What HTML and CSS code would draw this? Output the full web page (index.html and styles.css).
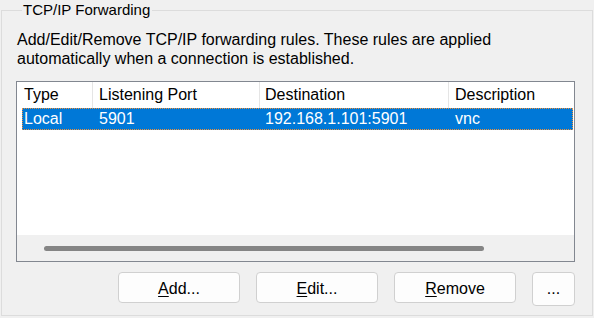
FILE: index.html
```html
<html>
<head>
  <title>TCP/IP Forwarding</title>
  <link rel="stylesheet" href="styles.css">
</head>
<body>

  <fieldset class="group">
    <legend>TCP/IP Forwarding</legend>

    <p class="hint">Add/Edit/Remove TCP/IP forwarding rules. These rules are applied<br>
      automatically when a connection is established.</p>

    <div class="list">
      <div class="cols head">
        <div class="cell">Type</div>
        <div class="cell">Listening Port</div>
        <div class="cell">Destination</div>
        <div class="cell">Description</div>
      </div>

      <div class="cols row selected">
        <div class="cell">Local</div>
        <div class="cell">5901</div>
        <div class="cell">192.168.1.101:5901</div>
        <div class="cell">vnc</div>
      </div>

      <div class="fill"></div>

      <div class="hscroll">
        <div class="thumb"></div>
      </div>
    </div>

    <div class="buttons">
      <button class="btn"><u>A</u>dd...</button>
      <button class="btn"><u>E</u>dit...</button>
      <button class="btn"><u>R</u>emove</button>
      <button class="btn more">...</button>
    </div>
  </fieldset>

</body>
</html>
```

FILE: styles.css
```css
body {
  margin: 0;
  background: #f0f0f0;
  font-family: "Liberation Sans", Arial, sans-serif;
  font-size: 16px;
  color: #000;
}

.group {
  margin: 0 1px;
  height: 316px;
  box-sizing: border-box;
  padding: 0 17px 0 14px;
  border: 1px solid #dcdcdc;
  min-inline-size: 0;
}

.group > legend {
  margin-left: 6px;
  padding: 0 2px 0 1px;
  line-height: 20px;
  font-size: 15px;
}

.hint {
  margin: 10px 0 0 1px;
  line-height: 19px;
}

/* list view */
.list {
  margin-top: 13px;
  height: 181px;
  box-sizing: border-box;
  border: 1px solid #828790;
  background: #fff;
  display: flex;
  flex-direction: column;
}

.cols {
  display: grid;
  grid-template-columns: 76px 167px 189px 1fr;
}

.head {
  height: 26px;
}

.head .cell {
  line-height: 26px;
  padding-left: 6px;
  border-right: 1px solid #e5e5e5;
}

.head .cell:first-child { padding-left: 7px; }
.head .cell:nth-child(3) { padding-left: 5px; }
.head .cell:last-child { border-right: none; }

.row {
  grid-template-columns: 71px 167px 189px 1fr;
  margin: 0 1px 0 5px;
  height: 22px;
}

.row .cell {
  line-height: 22px;
  padding-left: 6px;
}

.row .cell:first-child { padding-left: 2px; }
.row .cell:nth-child(3) { padding-left: 5px; }

.selected {
  background: #0078d7;
  color: #fff;
  outline: 1px dotted #f0913a;
  outline-offset: -1px;
}

.fill {
  flex: 1;
}

.hscroll {
  height: 26px;
  background: #f0f0f0;
  padding-top: 11px;
  box-sizing: border-box;
}

.hscroll > .thumb {
  margin-left: 27px;
  width: 440px;
  height: 5px;
  border-radius: 3px;
  background: #858585;
}

/* buttons */
.buttons {
  margin-top: 10px;
  display: flex;
  justify-content: flex-end;
  align-items: flex-start;
  gap: 16px;
}

.btn {
  width: 122px;
  height: 31px;
  font-family: inherit;
  font-size: 16px;
  color: #000;
  background: #fdfdfd;
  border: 1px solid #d0d0d0;
  border-radius: 4px;
  padding: 3px 0 0;
}

.btn u {
  text-underline-offset: 2px;
}

.btn.more {
  width: 43px;
  height: 34px;
  padding-top: 0;
}
```
